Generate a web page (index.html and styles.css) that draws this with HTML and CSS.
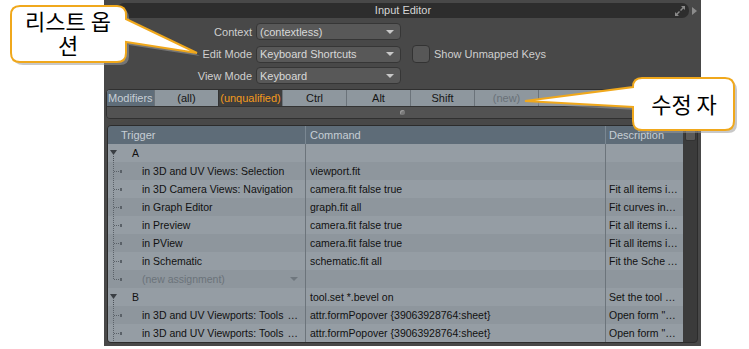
FILE: index.html
```html
<!DOCTYPE html>
<html lang="en">
<head>
    <meta charset="UTF-8">
    <title>Input Editor</title>
    <link rel="stylesheet" href="styles.css">
</head>
<body>
    <div class="panel">
        <div class="title-row">
            <div class="title-bar">
                <span></span>
                <span class="title">Input Editor</span>
                <svg class="expand" width="12" height="12" viewBox="0 0 12 12">
                    <path d="M7 1h4v4l-1.5-1.5-2.5 2.5-1-1 2.5-2.5z M5 11h-4v-4l1.5 1.5 2.5-2.5 1 1-2.5 2.5z" fill="#8a8a8a"/>
                </svg>
            </div>
            <svg class="side-arrow" width="5" height="8" viewBox="0 0 5 8"><path d="M0 0l5 4-5 4z" fill="#8c8c8c"/></svg>
        </div>

        <div class="form">
            <div class="form-row">
                <label class="form-label">Context</label>
                <div class="dropdown"><span>(contextless)</span><i class="caret"></i></div>
                <div></div>
            </div>
            <div class="form-row">
                <label class="form-label">Edit Mode</label>
                <div class="dropdown"><span>Keyboard Shortcuts</span><i class="caret"></i></div>
                <div class="check-wrap"><span class="checkbox"></span><span>Show Unmapped Keys</span></div>
            </div>
            <div class="form-row">
                <label class="form-label">View Mode</label>
                <div class="dropdown"><span>Keyboard</span><i class="caret"></i></div>
                <div></div>
            </div>
        </div>

        <div class="mods">
            <div class="tabs">
                <div class="tab tab-label">Modifiers</div>
                <div class="tab">(all)</div>
                <div class="tab tab-active">(unqualified)</div>
                <div class="tab">Ctrl</div>
                <div class="tab">Alt</div>
                <div class="tab">Shift</div>
                <div class="tab tab-new">(new)</div>
                <div class="tab-fill"></div>
            </div>
            <div class="splitter"><span class="dot"></span></div>
        </div>

        <div class="tree-frame">
            <div class="tree">
                <div class="row head">
                    <div class="cell c1 head-first">Trigger</div>
                    <div class="cell c2">Command</div>
                    <div class="cell c3">Description</div>
                </div>
                <div id="tree-body"></div>
            </div>
            <div class="gutter"><span class="corner"></span></div>
        </div>
    </div>

    <svg class="callouts" width="749" height="349" viewBox="0 0 749 349">
        <g fill="#9a9a9a" opacity="0.55" transform="translate(3 3)">
            <path d="M20 6H117Q126 6 126 15V19L197 53L126 42V53Q126 62 117 62H20Q11 62 11 53V15Q11 6 20 6Z"/>
            <path d="M642 78H725Q734 78 734 87V121Q734 130 725 130H642Q633 130 633 121V107L525 101L633 87Q633 78 642 78Z"/>
        </g>
        <path d="M20 6H117Q126 6 126 15V19L197 53L126 42V53Q126 62 117 62H20Q11 62 11 53V15Q11 6 20 6Z" fill="#fff" stroke="#f0a81c" stroke-width="2"/>
        <path d="M642 78H725Q734 78 734 87V121Q734 130 725 130H642Q633 130 633 121V107L525 101L633 87Q633 78 642 78Z" fill="#fff" stroke="#f0a81c" stroke-width="2"/>
    </svg>
    <div class="callout-text callout-left">리스트 옵 션</div>
    <div class="callout-text callout-right">수정 자</div>

    <script>
        // righe dell'albero: g = gruppo, c = figlio, n = nuova assegnazione
        const rows = [
            { t: 'g', name: 'A', cmd: '', desc: '' },
            { t: 'c', name: 'in 3D and UV Views: Selection', cmd: 'viewport.fit', desc: '' },
            { t: 'c', name: 'in 3D Camera Views: Navigation', cmd: 'camera.fit false true', desc: 'Fit all items i\u2026' },
            { t: 'c', name: 'in Graph Editor', cmd: 'graph.fit all', desc: 'Fit curves in\u2026' },
            { t: 'c', name: 'in Preview', cmd: 'camera.fit false true', desc: 'Fit all items i\u2026' },
            { t: 'c', name: 'in PView', cmd: 'camera.fit false true', desc: 'Fit all items i\u2026' },
            { t: 'c', name: 'in Schematic', cmd: 'schematic.fit all', desc: 'Fit the Sche\u2009\u2026' },
            { t: 'n', name: '(new assignment)', cmd: '', desc: '' },
            { t: 'g', name: 'B', cmd: 'tool.set *.bevel on', desc: 'Set the tool \u2026' },
            { t: 'c', name: 'in 3D and UV Viewports: Tools', more: true, cmd: 'attr.formPopover {39063928764:sheet}', desc: 'Open form "\u2026' },
            { t: 'c', name: 'in 3D and UV Viewports: Tools', more: true, cmd: 'attr.formPopover {39063928764:sheet}', desc: 'Open form "\u2026' }
        ];

        const groupIcon = '<svg class="twig" width="14" height="18" viewBox="0 0 14 18">' +
            '<path d="M1 6h7l-3.5 5z" fill="#3a3f44"/>' +
            '<path d="M4.5 12V18" stroke="#4a5057" stroke-dasharray="1 1"/></svg>';

        function branchIcon(last) {
            return '<svg class="twig" width="14" height="18" viewBox="0 0 14 18">' +
                '<path d="M4.5 0V' + (last ? '9' : '18') + 'M5 9.5H11" stroke="#5a6168" stroke-dasharray="1 1"/>' +
                '<rect x="11" y="8" width="2" height="3" fill="#5a6168"/></svg>';
        }

        const body = document.getElementById('tree-body');
        rows.forEach((r, i) => {
            const row = document.createElement('div');
            row.className = 'row ' + (i % 2 === 0 ? 'light' : 'dark');
            let first;
            if (r.t === 'g') {
                first = groupIcon + '<span class="group-name">' + r.name + '</span>';
            } else if (r.t === 'n') {
                first = branchIcon(true) + '<span class="child-name muted">' + r.name + '</span><i class="caret muted-caret"></i>';
            } else {
                first = branchIcon(false) + '<span class="child-name">' + r.name + '</span>' +
                    (r.more ? '<span class="more">\u2026</span>' : '');
            }
            row.innerHTML = `
                <div class="cell c1">${first}</div>
                <div class="cell c2">${r.cmd}</div>
                <div class="cell c3">${r.desc}</div>
            `;
            body.appendChild(row);
        });
    </script>
</body>
</html>
```

FILE: styles.css
```css
body {
    margin: 0;
    background: #fff;
    font-family: "Liberation Sans", Arial, sans-serif;
    font-size: 11px;
}
.panel {
    margin-left: 104px;
    width: 597px;
    height: 346px;
    background: #484848;
    color: #d0d0d0;
    display: flex;
    flex-direction: column;
}
.title-row {
    display: flex;
    align-items: center;
    padding: 3px 4px 0 13px;
}
.title-bar {
    flex: 1;
    height: 15px;
    margin-right: 3px;
    border-radius: 7px;
    background: #2d2d2d;
    display: grid;
    grid-template-columns: 1fr auto 1fr;
    align-items: center;
}
.title {
    color: #d6d6d6;
    line-height: 15px;
}
.expand {
    justify-self: end;
    margin-right: 3px;
}
.side-arrow {
    display: block;
}
.form {
    padding-top: 5px;
}
.form-row {
    display: grid;
    grid-template-columns: 148px 145px auto;
    column-gap: 4px;
    height: 17px;
    margin-bottom: 5px;
    align-items: center;
}
.form-label {
    text-align: right;
    color: #cfcfcf;
}
.dropdown {
    height: 17px;
    box-sizing: border-box;
    border: 1px solid #363636;
    border-radius: 4px;
    background: #585858;
    display: flex;
    align-items: center;
    justify-content: space-between;
    padding: 0 6px 0 3px;
    color: #d8d8d8;
}
.caret {
    width: 0;
    height: 0;
    border-left: 4px solid transparent;
    border-right: 4px solid transparent;
    border-top: 4px solid #c8c8c8;
}
.check-wrap {
    display: flex;
    align-items: center;
    margin-left: 7px;
    gap: 4px;
    color: #cfcfcf;
}
.checkbox {
    width: 18px;
    height: 18px;
    box-sizing: border-box;
    border: 1px solid #333;
    border-radius: 4px;
    background: #575757;
}
.mods {
    margin: 0 3px 0 2px;
    border: 1px solid #303030;
    border-radius: 4px;
    overflow: hidden;
}
.tabs {
    display: flex;
    height: 16px;
    background: #8e979e;
}
.tab {
    width: 64px;
    box-sizing: border-box;
    border-left: 1px solid #6b737a;
    text-align: center;
    line-height: 16px;
    color: #151515;
}
.tab-label {
    width: 47px;
    border-left: none;
    background: #5f6d79;
    color: #c6ced5;
    text-align: left;
    padding-left: 1px;
}
.tab-active {
    background: #3e3e3e;
    color: #f39a1c;
    border-left-color: #333;
}
.tab-new {
    color: #697178;
}
.tab-fill {
    flex: 1;
    border-left: 1px solid #6b737a;
}
.splitter {
    height: 11px;
    border-top: 1px solid #333;
    background: #525252;
    display: flex;
    align-items: center;
    justify-content: center;
}
.dot {
    width: 5px;
    height: 5px;
    border-radius: 50%;
    background: #7a7a7a;
    box-shadow: inset 1px 1px 0 #9a9a9a;
}
.tree-frame {
    margin: 6px 3px 0 3px;
    border: 1px solid #2c2c2c;
    border-radius: 4px;
    overflow: hidden;
    display: flex;
    background: #3b3b3b;
}
.tree {
    width: 575px;
}
.gutter {
    flex: 1;
    display: flex;
    justify-content: center;
}
.corner {
    width: 11px;
    height: 14px;
    margin-top: 1px;
    box-sizing: border-box;
    border: 1px solid #333;
    border-radius: 2px;
    background: #5a5a5a;
}
.row {
    display: grid;
    grid-template-columns: 198px 300px 77px;
    height: 18px;
    line-height: 18px;
    color: #111;
    font-size: 10.5px;
}
.light {
    background: #959da4;
}
.dark {
    background: #8e969d;
}
.head {
    background: #5e6c78;
    color: #c6ced5;
    font-size: 11px;
}
.cell {
    box-sizing: border-box;
    padding-left: 3px;
    white-space: nowrap;
    overflow: hidden;
}
.c1, .c2 {
    border-right: 1px solid #6c747b;
}
.head .c1, .head .c2 {
    border-right-color: #7a8792;
}
.head-first {
    padding-left: 13px;
}
.row .c1 {
    display: flex;
    align-items: center;
}
.head .c1 {
    display: block;
}
.row .c2 {
    padding-left: 4px;
}
.row .c1 .twig {
    flex: none;
    margin-left: -2px;
}
.group-name {
    margin-left: 9px;
}
.child-name {
    margin-left: 19px;
    flex: 1;
    min-width: 0;
    overflow: hidden;
}
.muted {
    color: #6b737a;
}
.muted-caret {
    margin-right: 7px;
    border-top-color: #6f777e;
}
.more {
    margin-left: 4px;
    margin-right: 7px;
}
.callouts {
    position: absolute;
    top: 0;
    left: 0;
}
.callout-text {
    position: absolute;
    font-family: "Noto Sans CJK KR", sans-serif;
    font-size: 22px;
    line-height: 24px;
    color: #000;
    text-align: center;
}
.callout-left {
    left: 15px;
    top: 8px;
    width: 106px;
}
.callout-right {
    left: 636px;
    top: 91px;
    width: 96px;
}
```
